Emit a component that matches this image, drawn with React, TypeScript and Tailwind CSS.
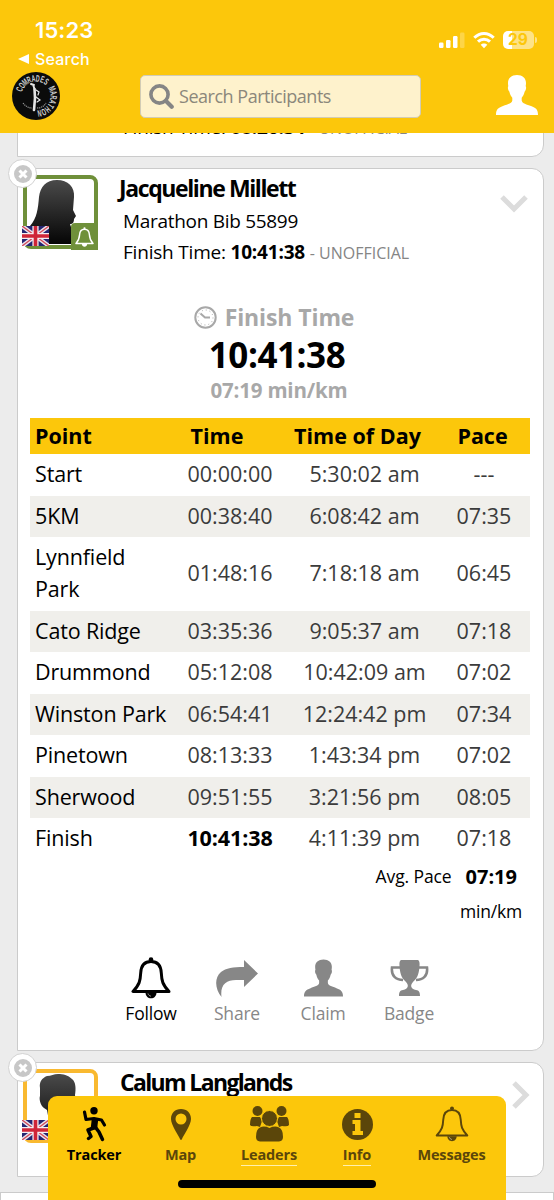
import type { ReactNode } from 'react'

type Split = {
    point: string
    time: string
    timeOfDay: string
    pace: string
    height: string
}

const splits: Split[] = [
    { point: 'Start', time: '00:00:00', timeOfDay: '5:30:02 am', pace: '---', height: 'h-[42px]' },
    { point: '5KM', time: '00:38:40', timeOfDay: '6:08:42 am', pace: '07:35', height: 'h-[41px]' },
    { point: 'Lynnfield Park', time: '01:48:16', timeOfDay: '7:18:18 am', pace: '06:45', height: 'h-[74px]' },
    { point: 'Cato Ridge', time: '03:35:36', timeOfDay: '9:05:37 am', pace: '07:18', height: 'h-[41px]' },
    { point: 'Drummond', time: '05:12:08', timeOfDay: '10:42:09 am', pace: '07:02', height: 'h-[42px]' },
    { point: 'Winston Park', time: '06:54:41', timeOfDay: '12:24:42 pm', pace: '07:34', height: 'h-[41px]' },
    { point: 'Pinetown', time: '08:13:33', timeOfDay: '1:43:34 pm', pace: '07:02', height: 'h-[42px]' },
    { point: 'Sherwood', time: '09:51:55', timeOfDay: '3:21:56 pm', pace: '08:05', height: 'h-[41px]' },
    { point: 'Finish', time: '10:41:38', timeOfDay: '4:11:39 pm', pace: '07:18', height: 'h-[42px]' },
]

function BellIcon({ className, width = 2.6 }: { className?: string; width?: number }) {
    return (
        <svg viewBox="0 0 40 42" className={className} fill="none" stroke="currentColor">
            <circle cx="20" cy="2.6" r="2.3" fill="currentColor" stroke="none" />
            <path
                d="M20 4.5C12.500 4.500 10 10 9.700 16C9.300 24 8.500 27.500 2 34.500H38C31.500 27.500 30.700 24 30.300 16C30 10 27.500 4.500 20 4.500Z"
                strokeWidth={width}
                strokeLinejoin="round"
            />
            <path d="M14.500 35.500C14.500 39 17 41.300 20 41.300S25.500 39 25.500 35.500Z" fill="currentColor" stroke="none" />
            <path d="M17 36.500C17.300 38 18.500 39 20 39.200" stroke="white" strokeOpacity=".55" strokeWidth="1" />
        </svg>
    )
}

function PersonIcon({ className }: { className?: string }) {
    return (
        <svg viewBox="0 0 42 40" className={className} fill="currentColor">
            <path d="M21 0C15.500 0 12 3 12 8C12 9.500 12.200 10.500 12.300 11.200C11.500 12 11.900 15.500 13.300 16.500C14 19.500 15 21.300 16.300 22.700V25.500C16 28.500 11 29.500 7 31C2 32.800 0 34.500 0 40H42C42 34.500 40 32.800 35 31C31 29.500 26 28.500 25.700 25.500V22.700C27 21.300 28 19.500 28.700 16.500C30.100 15.500 30.500 12 29.700 11.200C29.800 10.500 30 9.500 30 8C30 3 26.500 0 21 0Z" />
        </svg>
    )
}

function Logo() {
    return (
        <svg viewBox="0 0 48 48" className="size-12 shrink-0">
            <circle cx="24" cy="24" r="24" fill="#0b0b0b" />
            <g fill="#cfcfcf" fontSize="9.500" fontWeight="700" fontFamily="Liberation Sans, sans-serif" textAnchor="middle">
                {'COMRADES MARATHON'.split('').map((letter, i) => (
                    <text key={i} transform={`rotate(${-68 + i * 14.8} 24 24) translate(24 9.5) scale(.56 1)`}>
                        {letter}
                    </text>
                ))}
            </g>
            <g stroke="#e5e5e5" fill="none" strokeLinecap="round">
                <path d="M19 12L22 13M21.500 14L22.500 17" strokeWidth="2" />
                <path d="M22.500 17L23 26L22 38" strokeWidth="2.600" />
                <path d="M24 18L27 20L26 23M24 25L28 28L25 30" strokeWidth="1.200" />
                <path d="M11 31Q15 36 20 36M25 36Q31 36 34 31" strokeWidth="1.200" strokeDasharray="1.200 .8" strokeLinecap="butt" stroke="#999" />
            </g>
        </svg>
    )
}

function Flag() {
    return (
        <svg viewBox="0 0 27 20" preserveAspectRatio="none" className="h-5 w-[27px]">
            <path fill="#252571" d="M0 0H27V20H0Z" />
            <path d="M0 0L27 20M27 0L0 20" stroke="#e8e4ee" strokeWidth="4.200" />
            <path d="M0 0L27 20M27 0L0 20" stroke="#d54a59" strokeWidth="1.400" />
            <path d="M13.500 0V20M0 10H27" stroke="#f4edf0" strokeWidth="6.200" />
            <path d="M13.500 0V20M0 10H27" stroke="#cf2638" strokeWidth="3.600" />
        </svg>
    )
}

function RemoveButton() {
    return (
        <div className="absolute -left-[10px] -top-[10px] flex size-[29px] items-center justify-center rounded-full border-[1.500px] border-[#d2d2d2] bg-white">
            <svg viewBox="0 0 18 18" className="size-[18px]">
                <circle cx="9" cy="9" r="9" fill="#c7c7c7" />
                <path d="M5.500 5.500L12.500 12.500M12.500 5.500L5.500 12.500" stroke="white" strokeWidth="3" />
            </svg>
        </div>
    )
}

function Avatar({ female }: { female?: boolean }) {
    return (
        <div
            className={
                female
                    ? 'relative h-[74px] w-[75px] shrink-0 rounded-[8px] border-4 border-[#6f903a]'
                    : 'relative h-[74px] w-[75px] shrink-0 rounded-[8px] border-4 border-[#f9b930]'
            }
        >
            <svg viewBox="0 0 67 66" className="block h-[66px] w-[67px]">
                <defs>
                    <linearGradient id="hair" x1="0" y1="0" x2="0" y2="1">
                        <stop offset="0" stopColor="#4a4a4a" />
                        <stop offset="1" stopColor="#050505" />
                    </linearGradient>
                </defs>
                {female ? (
                    <path
                        fill="url(#hair)"
                        d="M30 1C19 1 13 8 12 18C11 30 10 39 3 47V65H44V48L43 45C46 45 47 43 47 40L49 37L46 31L47 18C48 8 41 1 30 1Z"
                    />
                ) : (
                    <path
                        fill="url(#hair)"
                        d="M31 1C27 1 24 3 20 3C15 5 12 9 13 15L13 23C12 25 13 32 17 35L20 37L22 48L8 66H58L44 48L47 35L49 30L48 22C49 16 49 9 45 6C41 2 36 1 31 1Z"
                    />
                )}
            </svg>
            <div className="absolute -left-[5px] top-[47px]"><Flag /></div>
            {female && (
                <div className="absolute -bottom-[5px] -right-1 flex size-[27px] items-center justify-center rounded-tl-[4px] bg-[#6f903a] text-white">
                    <BellIcon className="h-[20px] w-[19px]" width={3} />
                </div>
            )}
        </div>
    )
}

function StatusBar() {
    return (
        <div className="flex h-[70px] justify-between text-white">
            <div className="pl-[18px] pt-[17px] font-['Inter',sans-serif]">
                <p className="pl-[17px] text-[22px] font-semibold leading-[26px] tracking-[0.100px]">15:23</p>
                <p className="mt-[6px] flex items-center gap-[6px] text-[16px] font-medium leading-5 tracking-[0.200px]">
                    <svg viewBox="0 0 11 10" className="h-2.5 w-[11px]" fill="currentColor">
                        <path d="M0 5L11 0V10Z" />
                    </svg>
                    Search
                </p>
            </div>
            <div className="flex gap-2 pr-[17px] pt-[31px]">
                <svg viewBox="0 0 26 18" className="h-[18px] w-[26px]" fill="currentColor">
                    <rect x="0" y="11.500" width="4.500" height="5.500" rx="1.200" />
                    <rect x="7" y="9" width="4.500" height="8" rx="1.200" />
                    <rect x="14" y="5" width="4.500" height="12" rx="1.200" />
                    <rect x="21" y="1.500" width="4.500" height="15.500" rx="1.200" opacity=".25" />
                </svg>
                <svg viewBox="0 0 22 18" className="h-[18px] w-[22px]" fill="none" stroke="currentColor" strokeWidth="3">
                    <path d="M1.300 6.800C7 1 15 1 20.700 6.800" />
                    <path d="M5 10.700C8.500 7.300 13.500 7.300 17 10.700" />
                    <path d="M11 17.200L7.700 13.800C9.500 12 12.500 12 14.300 13.800Z" fill="currentColor" stroke="none" />
                </svg>
                <div className="flex h-[18px] items-center gap-px">
                    <div className="flex h-[18px] w-[31px] items-center justify-center rounded-[5px] bg-linear-to-r from-white from-28% to-[#fde388] to-28% font-['Inter',sans-serif] text-[15.500px] font-bold leading-none text-[#fcc70b]">
                        29
                    </div>
                    <div className="h-1.5 w-[2.500px] rounded-r-full bg-[#fde388]" />
                </div>
            </div>
        </div>
    )
}

function Header() {
    return (
        <header className="relative z-10 h-[133px] shrink-0 bg-[#fcc70b]">
            <StatusBar />
            <div className="flex items-start pl-3">
                <div className="mt-0.5"><Logo /></div>
                <div className="ml-20 mt-[5px] flex h-[43px] w-[281px] items-center rounded-[5px] border-[1.500px] border-[#d2ccb5] bg-[#fef2cc] pl-2">
                    <svg viewBox="0 0 25 25" className="size-[25px]" fill="none" stroke="#858585" strokeLinecap="round">
                        <circle cx="10.500" cy="10.500" r="8.600" strokeWidth="3.600" />
                        <path d="M17 17L22.700 22.700" strokeWidth="4.200" />
                    </svg>
                    <span className="mb-0.5 ml-[5px] text-[18px] leading-none tracking-[-0.480px] text-[#8b877b]">Search Participants</span>
                </div>
                <PersonIcon className="ml-[75px] mt-[5px] h-10 w-[42px] text-white" />
            </div>
        </header>
    )
}

function ActionItem({ label, active, children }: { label: string; active?: boolean; children: ReactNode }) {
    return (
        <div className={active ? 'flex w-[86px] flex-col items-center text-black' : 'flex w-[86px] flex-col items-center text-[#878787]'}>
            <div className="flex h-[42px] items-center">{children}</div>
            <span className="mt-0.5 text-[17.500px] leading-6 tracking-[-0.200px]">{label}</span>
        </div>
    )
}

function SplitTable() {
    return (
        <div className="mx-3 w-[500px]">
            <div className="grid h-9 grid-cols-[145px_84px_197px_53px] items-center bg-[#fcc70b] text-center text-[21.500px] font-bold">
                <span className="pl-[5px] text-left">Point</span>
                <span>Time</span>
                <span className="whitespace-nowrap">Time of Day</span>
                <span className="flex justify-center">Pace</span>
            </div>
            {splits.map((split, i) => (
                <div
                    key={split.point}
                    className={`grid grid-cols-[145px_110px_159px_80px] items-center pb-0.5 text-center text-[21.500px] leading-8 text-[#3b3b3b] ${split.height} ${i % 2 ? 'bg-[#f0efeb]' : 'bg-white'}`}
                >
                    <span className={`pl-[5px] text-left tracking-[-0.150px] text-black ${split.point === 'Lynnfield Park' ? 'w-[125px]' : 'whitespace-nowrap'}`}>{split.point}</span>
                    <span className={split.point === 'Finish' ? 'font-bold tracking-[-0.100px] text-black' : ''}>{split.time}</span>
                    <span>{split.timeOfDay}</span>
                    <span>{split.pace}</span>
                </div>
            ))}
            <div className="-mt-px flex justify-end pr-[13px] text-[17.500px] leading-[35px]">
                <span className="tracking-[-0.100px]">Avg. Pace</span>
                <b className="ml-[14px] text-[20px]">07:19</b>
            </div>
            <p className="pr-2 text-right text-[17.500px] leading-[35px] tracking-[-0.200px]">min/km</p>
        </div>
    )
}

function ParticipantCard() {
    return (
        <section className="relative ml-[17px] mt-[11px] h-[883px] w-[527px] shrink-0 rounded-r-[12px] border-[1.500px] border-[#cbcbcb] bg-white">
            <div className="flex pl-[5px] pt-1.5">
                <Avatar female />
                <div className="ml-[21px] flex-1">
                    <h2 className="-mt-px text-[23px] font-bold leading-7 tracking-[-1.400px]">Jacqueline Millett</h2>
                    <p className="ml-1 mt-[3px] text-[19px] leading-8 tracking-[-0.300px]">Marathon Bib 55899</p>
                    <p className="-mt-px ml-1 text-[19px] leading-8 tracking-[-0.200px]">
                        Finish Time: <b>10:41:38</b> <span className="text-[16px] tracking-[0px] text-[#858585]">- UNOFFICIAL</span>
                    </p>
                </div>
                <svg viewBox="0 0 28 18" className="mr-[15px] mt-5 h-[18px] w-7" fill="none" stroke="#dcdcdc" strokeWidth="5">
                    <path d="M2 2L14 14L26 2" />
                </svg>
            </div>
            <div className="mt-7 flex h-[121px] flex-col items-center pr-[7px] pt-1 text-[#a8a8a8]">
                <div className="mr-1.5 flex items-center gap-2 text-[23px] font-bold leading-8 tracking-[-0.100px]">
                    <svg viewBox="0 0 23 23" className="size-[23px]" fill="none" stroke="currentColor">
                        <circle cx="11.500" cy="11.500" r="10.200" strokeWidth="2" />
                        <path d="M6.500 7.500L11 11.500H16" strokeWidth="2" />
                        <circle cx="11.500" cy="11.500" r="7.500" strokeDasharray="1 2.930" />
                    </svg>
                    <span>Finish Time</span>
                </div>
                <p className="mt-0.5 text-[35px] font-bold leading-10 tracking-[-0.450px] text-black">10:41:38</p>
                <p className="ml-1 mt-px text-[20.500px] font-bold leading-7 tracking-[-0.200px]">07:19 min/km</p>
            </div>
            <SplitTable />
            <div className="ml-[90px] mt-7 flex">
                <ActionItem label="Follow" active>
                    <BellIcon className="h-[42px] w-10" width={3} />
                </ActionItem>
                <ActionItem label="Share">
                    <svg viewBox="0 0 42 37" className="h-[37px] w-[42px]" fill="currentColor">
                        <path d="M28 0L42 13.500L28 27V20H20C10 20 4 25 5.500 37C-1 29 -2 18 5 12C10 8 17 7 28 7Z" />
                    </svg>
                </ActionItem>
                <ActionItem label="Claim">
                    <PersonIcon className="h-[38px] w-[39px]" />
                </ActionItem>
                <ActionItem label="Badge">
                    <svg viewBox="0 0 39 36" className="h-9 w-[39px]" fill="currentColor">
                        <path d="M11 0H28Q30 1 29.500 6C29 16 26 19 23 22C20 25 20.500 29 26 30C29 30.500 30 32 30 36H9C9 32 10 30.500 13 30C18.500 29 19 25 16 22C13 19 10 16 9.500 6Q9 1 11 0Z" />
                        <path d="M10 7.500H2C1 16 6 20 13 20M29 7.500H37C38 16 33 20 26 20" fill="none" stroke="currentColor" strokeWidth="2.600" />
                    </svg>
                </ActionItem>
            </div>
            <RemoveButton />
        </section>
    )
}

function NavItem({ label, active, underline, className, children }: { label: string; active?: boolean; underline?: boolean; className: string; children: ReactNode }) {
    return (
        <div className={`flex flex-col items-center ${active ? 'text-black' : 'text-[#5b460a]'} ${className}`}>
            <div className="flex h-[38px] items-center">{children}</div>
            <span className={`mt-0.5 whitespace-nowrap text-[14.500px] font-bold leading-5 tracking-[-0.150px] ${underline ? 'border-b-[1.500px] border-[#fff0ad]' : ''}`}>{label}</span>
        </div>
    )
}

function BottomNav() {
    return (
        <nav className="absolute bottom-0 left-12 z-10 h-[104px] w-[458px] rounded-t-[9px] bg-[#fcc70b] pt-[9px]">
            <div className="flex">
                <NavItem label="Tracker" active className="w-[92px]">
                    <svg viewBox="0 0 25 35" className="h-[35px] w-[25px]" fill="none" stroke="currentColor" strokeLinecap="round" strokeLinejoin="round">
                        <circle cx="12" cy="3.700" r="3.700" fill="currentColor" stroke="none" />
                        <path d="M2.500 5L4 12.500L12 11.500L19.500 13L22.500 18" strokeWidth="3.200" />
                        <path d="M13 12L12 21" strokeWidth="6.500" strokeLinecap="butt" />
                        <path d="M11.500 21L6 23L9 29.500L6.500 31.500M14 21L17 25L20.500 32.500" strokeWidth="3.500" />
                    </svg>
                </NavItem>
                <NavItem label="Map" className="w-[81px]">
                    <svg viewBox="0 0 20 31" className="h-[31px] w-5" fill="currentColor">
                        <path fillRule="evenodd" d="M10 0C4 0 0 4 0 10C0 16 8 27 9 30Q10 32 11 30C12 27 20 16 20 10C20 4 16 0 10 0ZM10 4.500A5.500 5.500 0 1 1 10 15.500A5.500 5.500 0 0 1 10 4.500Z" />
                    </svg>
                </NavItem>
                <NavItem label="Leaders" underline className="w-[96px]">
                    <svg viewBox="0 0 39 36" className="h-9 w-[39px]" fill="currentColor">
                        <circle cx="7.500" cy="5" r="5" />
                        <circle cx="31.500" cy="5" r="5" />
                        <path d="M2 11H10L12 15L10 21L7 20Q1 21 0 19Q0 13 2 11ZM37 11H29L27 15L29 21L32 20Q38 21 39 19Q39 13 37 11Z" />
                        <circle cx="19.500" cy="12.500" r="8" stroke="#fcc70b" />
                        <path d="M10 21.500Q14 19.500 19.500 22Q25 19.500 29 21.500Q33 23 33 31Q33 35 29 35.500H10Q6 35 6 31Q6 23 10 21.500Z" />
                    </svg>
                </NavItem>
                <NavItem label="Info" underline className="w-[80px]">
                    <svg viewBox="0 0 31 31" className="size-[31px]" fill="currentColor">
                        <circle cx="15.500" cy="15.500" r="15.500" />
                        <path fill="#fcc70b" d="M12.500 4H18.500V9H12.500ZM10.500 11H18.500V22H21V26H10.500V22H13V15H10.500Z" />
                    </svg>
                </NavItem>
                <NavItem label="Messages" className="w-[109px]">
                    <BellIcon className="h-[36px] w-[34px]" width={2.3} />
                </NavItem>
            </div>
            <div className="absolute bottom-3 left-[130px] h-2 w-[198px] rounded-full bg-black" />
        </nav>
    )
}

export default function App() {
    return (
        <main className="relative flex h-[1200px] w-[554px] flex-col overflow-hidden bg-[#ececec] font-['Open_Sans',sans-serif] text-black">
            <Header />
            <section className="-mt-[30px] ml-[17px] h-[54px] w-[527px] shrink-0 rounded-r-[12px] border-[1.500px] border-[#cbcbcb] bg-white pl-[105px]">
                <p className="mt-[7px] text-[19px] leading-8 tracking-[-0.200px]">
                    Finish Time: <b>08:26:34</b> <span className="text-[16px] text-[#858585]">- UNOFFICIAL</span>
                </p>
            </section>
            <ParticipantCard />
            <section className="relative ml-[17px] mt-[11px] flex h-[115px] w-[527px] shrink-0 rounded-r-[12px] border-[1.500px] border-[#cbcbcb] bg-white pl-[5px] pt-1.5">
                <Avatar />
                <h2 className="-mt-px ml-[22px] flex-1 text-[23px] font-bold leading-7 tracking-[-1.650px]">Calum Langlands</h2>
                <svg viewBox="0 0 18 28" className="mr-[13px] mt-3 h-7 w-[18px]" fill="none" stroke="#dcdcdc" strokeWidth="5">
                    <path d="M2 2L14 14L2 26" />
                </svg>
                <RemoveButton />
            </section>
            <section className="mt-[15px] h-5 w-[554px] shrink-0 border-[1.500px] border-[#cbcbcb] bg-white" />
            <BottomNav />
        </main>
    )
}
